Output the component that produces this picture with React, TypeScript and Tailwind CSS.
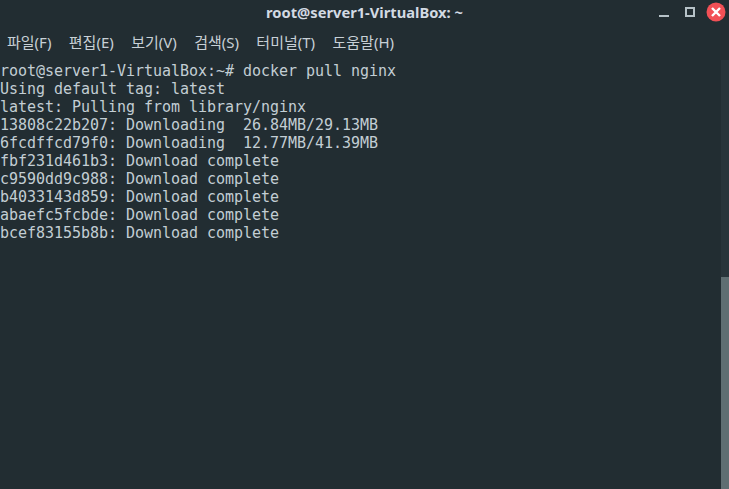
import React from 'react';

const MENUS = ['파일(F)', '편집(E)', '보기(V)', '검색(S)', '터미널(T)', '도움말(H)'];

const LINES = [
    'root@server1-VirtualBox:~# docker pull nginx',
    'Using default tag: latest',
    'latest: Pulling from library/nginx',
    '13808c22b207: Downloading  26.84MB/29.13MB',
    '6fcdffcd79f0: Downloading  12.77MB/41.39MB',
    'fbf231d461b3: Download complete',
    'c9590dd9c988: Download complete',
    'b4033143d859: Download complete',
    'abaefc5fcbde: Download complete',
    'bcef83155b8b: Download complete',
];

export default function App() {
    return (
        <div className="w-[729px] h-[489px] flex flex-col bg-[#222d32] overflow-hidden font-['Noto_Sans','Noto_Sans_CJK_KR',sans-serif]">
            <header className="relative h-[25px] flex items-center justify-center shrink-0">
                <h1 className="text-[14.7px] font-bold text-[#d3dae3] font-['Noto_Sans','Noto_Sans_CJK_KR',sans-serif]">root@server1-VirtualBox: ~</h1>
                <div className="absolute right-[3px] top-[2px] flex items-center">
                    <svg width="20" height="20" viewBox="0 0 20 20" className="mr-[6px]">
                        <rect x="0" y="13" width="10" height="2" fill="#b6c2c8" />
                    </svg>
                    <svg width="20" height="20" viewBox="0 0 20 20" className="mr-[1px]">
                        <rect x="1" y="6" width="8" height="8" fill="none" stroke="#b6c2c8" strokeWidth="2" />
                    </svg>
                    <svg width="20" height="20" viewBox="0 0 20 20">
                        <circle cx="10" cy="10" r="9.5" fill="#f25056" />
                        <path d="M6 6 L14 14 M14 6 L6 14" stroke="#ffffff" strokeWidth="2.4" />
                    </svg>
                </div>
            </header>
            <nav className="h-[35px] flex items-center pl-[7px] gap-[17.4px] text-[15px] text-[#c8d0d6] shrink-0">
                {MENUS.map(m => <span key={m}>{m}</span>)}
            </nav>
            <div className="flex-1 flex min-h-0">
                <pre className="flex-1 pt-[2px] text-[15px] tracking-[-0.03px] leading-[18px] text-[#c3ced4] font-['DejaVu_Sans_Mono',monospace]">
                    {LINES.join('\n')}
                </pre>
                <div className="w-[8px] flex flex-col justify-end bg-[#28343a]">
                    <div className="h-[212px] bg-[#5f6e72]" />
                </div>
            </div>
        </div>
    );
}
